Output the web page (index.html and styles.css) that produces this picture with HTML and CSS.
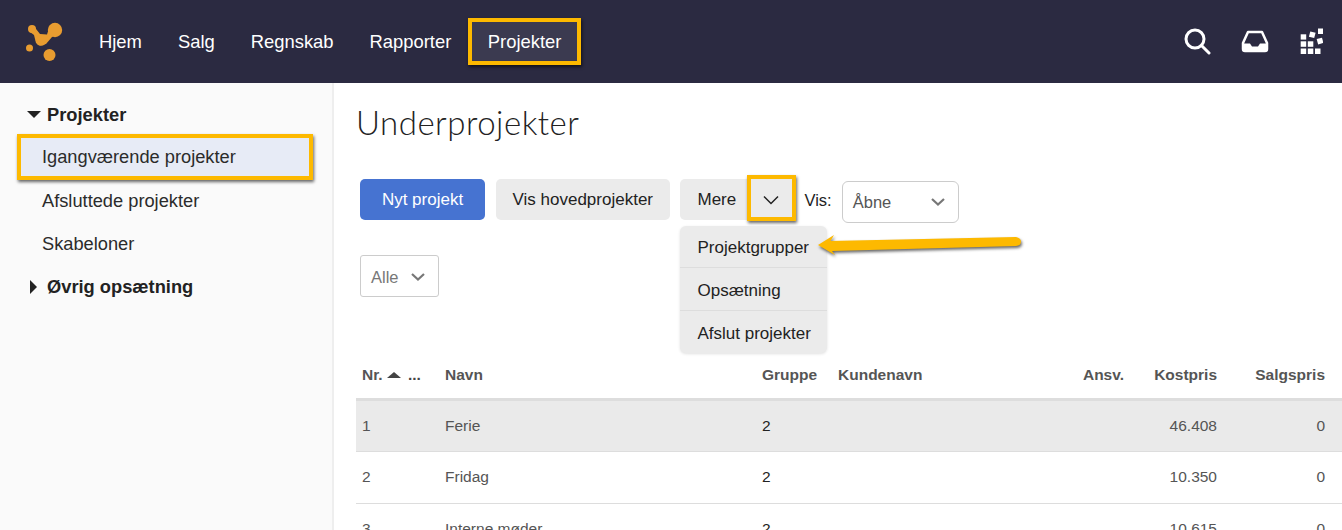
FILE: index.html
```html
<!DOCTYPE html>
<html lang="da">
<head>
<meta charset="utf-8">
<title>Underprojekter</title>
<link rel="stylesheet" href="styles.css">
</head>
<body>
<header class="topbar">
  <svg class="logo" viewBox="25 20 40 42" width="40" height="42" aria-hidden="true">
    <path d="M29.500 25.500 L34.500 26 L40 33 L47 33.500 L50 24 L58 33 L52 36 L46 43 L40 44.500 L36 42 L34 34 L30 31 Z"/>
    <circle cx="32" cy="28" r="4"/><circle cx="55" cy="29" r="7.200"/><circle cx="41" cy="39.500" r="5.200"/>
    <circle cx="29.500" cy="47" r="3.500"/><circle cx="49.500" cy="54" r="6"/>
  </svg>
  <nav class="mainnav">
    <a class="navlink">Hjem</a>
    <a class="navlink">Salg</a>
    <a class="navlink">Regnskab</a>
    <a class="navlink">Rapporter</a>
    <a class="navlink navlink-active">Projekter</a>
  </nav>
  <div class="topicons">
    <svg viewBox="0 0 28 28" width="28" height="28" aria-hidden="true"><circle cx="12" cy="11" r="9" class="ic-stroke"/><path d="M18.500 17.500 L26 25" class="ic-stroke"/></svg>
    <svg viewBox="0 0 28 24" width="28" height="24" aria-hidden="true"><path d="M7 2 H21 L26 13 V19 Q26 21 24 21 H4 Q2 21 2 19 V13 Z" class="ic-inbox"/><path d="M2 13.500 H9 L11 16.500 H17 L19 13.500 H26 V19 Q26 21 24 21 H4 Q2 21 2 19 Z" class="ic-fill"/></svg>
    <svg class="ic-grid" viewBox="1300 28 23 27" width="23" height="27" aria-hidden="true">
      <rect x="1300.700" y="34.300" width="5.500" height="5.300"/>
      <rect x="1300.700" y="41.300" width="5.500" height="5.500"/><rect x="1307.800" y="41.300" width="5.500" height="5.500"/>
      <rect x="1300.700" y="48.500" width="5.500" height="5.500"/><rect x="1307.800" y="48.500" width="5.500" height="5.500"/><rect x="1315" y="48.500" width="5.500" height="5.500"/>
      <rect x="1309.500" y="32" width="5.500" height="5.500" transform="rotate(15 1312.250 34.750)"/>
      <rect x="1318" y="28.500" width="5.500" height="5.500"/>
      <rect x="1317.300" y="38.300" width="5.500" height="5.500" transform="rotate(-15 1320 41)"/>
    </svg>
  </div>
</header>
<div class="layout">
  <aside class="sidebar">
    <div class="sidehead"><span class="tri-down"></span>Projekter</div>
    <a class="sideitem sideitem-active">Igangværende projekter</a>
    <a class="sideitem">Afsluttede projekter</a>
    <a class="sideitem">Skabeloner</a>
    <div class="sidehead"><span class="tri-right"></span>Øvrig opsætning</div>
  </aside>
  <main class="content">
    <h1 class="title">Underprojekter</h1>
    <div class="toolbar">
      <button class="btn btn-primary">Nyt projekt</button>
      <button class="btn">Vis hovedprojekter</button>
      <div class="split">
        <button class="split-main">Mere</button>
        <button class="split-toggle" aria-label="Mere"><svg viewBox="0 0 16 10" width="16" height="10" aria-hidden="true"><path d="M1 1.500 L8 8.500 L15 1.500" class="chev-thin"/></svg></button>
        <ul class="menu">
          <li class="menuitem">Projektgrupper</li>
          <li class="menuitem">Opsætning</li>
          <li class="menuitem">Afslut projekter</li>
        </ul>
        <svg class="arrow" viewBox="815 230 210 28" width="210" height="28" aria-hidden="true"><path d="M818 245 L834 235 L830.500 241 L1016 237 Q1021 238 1021 241.500 Q1021 245.500 1016 246 L832 251 L835 255 Z"/></svg>
      </div>
      <span class="vis-label">Vis:</span>
      <div class="select select-open">Åbne<svg viewBox="0 0 16 10" width="16" height="10" aria-hidden="true"><path d="M2 2 L8 7.500 L14 2" class="chev"/></svg></div>
    </div>
    <div class="select select-all">Alle<svg viewBox="0 0 16 10" width="16" height="10" aria-hidden="true"><path d="M2 2 L8 7.500 L14 2" class="chev"/></svg></div>
    <table class="grid">
      <thead>
        <tr>
          <th class="c-nr">Nr. <span class="tri-up"></span><span class="dots">...</span></th>
          <th class="c-name">Navn</th>
          <th class="c-grp">Gruppe</th>
          <th class="c-cust">Kundenavn</th>
          <th class="c-resp num">Ansv.</th>
          <th class="c-cost num">Kostpris</th>
          <th class="c-sale num">Salgspris</th>
        </tr>
      </thead>
      <tbody>
        <tr class="row-hover"><td>1</td><td>Ferie</td><td class="strong">2</td><td></td><td></td><td class="num">46.408</td><td class="num">0</td></tr>
        <tr><td>2</td><td>Fridag</td><td class="strong">2</td><td></td><td></td><td class="num">10.350</td><td class="num">0</td></tr>
        <tr><td>3</td><td>Interne møder</td><td class="strong">2</td><td></td><td></td><td class="num">10.615</td><td class="num">0</td></tr>
      </tbody>
    </table>
  </main>
</div>
</body>
</html>
```
FILE: styles.css
```css
* { box-sizing: border-box; }
html, body { margin: 0; height: 530px; overflow: hidden; background: #fff; }
body { font-family: "Liberation Sans", Arial, sans-serif; color: #222; font-size: 17px; }

.topbar { height: 83px; background: #2b2a41; display: flex; align-items: center; padding: 0 19px 0 25px; }
.logo { flex: none; fill: #e89c30; }
.mainnav { display: flex; align-items: center; margin-left: 16px; }
.navlink { color: #fff; font-size: 18.400px; padding: 0 18px; white-space: nowrap; }
.navlink-active { margin-left: -1px; padding: 0 16px 0 15.500px; height: 47px; line-height: 39px; background: #3b3a50; border: 4px solid #fdb900; box-shadow: 1px 2px 3px rgba(0,0,0,.6); }
.topicons { margin-left: auto; display: flex; align-items: center; gap: 30px; }
.ic-stroke { fill: none; stroke: #fff; stroke-width: 3; stroke-linecap: round; }
.ic-inbox { fill: none; stroke: #fff; stroke-width: 2.500; stroke-linejoin: round; }
.ic-fill { fill: #fff; }
.ic-grid { fill: #fff; margin-left: 1px; }

.layout { display: flex; height: 447px; }
.sidebar { width: 334px; flex: none; background: #fafafa; border-right: 2px solid #eee; padding-top: 10px; }
.sidehead { height: 43px; display: flex; align-items: center; font-weight: bold; font-size: 18.300px; color: #222; padding-left: 27px; }
.tri-down { width: 0; height: 0; border-left: 7px solid transparent; border-right: 7px solid transparent; border-top: 7px solid #222; margin-right: 6px; }
.tri-right { width: 0; height: 0; border-top: 7px solid transparent; border-bottom: 7px solid transparent; border-left: 7px solid #222; margin: 0 10px 0 3px; }
.sideitem { display: flex; align-items: center; height: 43px; padding-left: 42px; font-size: 18.250px; color: #2b2b2b; }
.sideitem-active { height: 46px; margin: -2px 19px -1px 17px; padding-left: 21px; background: #e7ebf6; border: 4px solid #fdb900; box-shadow: 1px 2px 3px rgba(0,0,0,.6); }

.content { flex: 1; min-width: 0; padding: 0 0 0 22px; }
.title { margin: 0; padding-top: 20px; font-family: Lato, "Liberation Sans", sans-serif; font-weight: 300; font-size: 33px; line-height: 38px; color: #222; letter-spacing: .5px; }
.toolbar { display: flex; align-items: flex-start; margin: 38px 0 0 4px; }
.btn { height: 41px; border: 0; border-radius: 5px; background: #ebebeb; font: 17px "Liberation Sans", Arial, sans-serif; color: #222; padding: 1px 16.500px 0; margin-right: 11px; }
.btn-primary { background: #4673d1; color: #fff; width: 125px; padding: 1px 0 0; }
.split { position: relative; display: flex; height: 41px; width: 116px; background: #ebebeb; border-radius: 5px; margin-left: -1px; }
.split-main { width: 67px; border: 0; background: none; font: 17px "Liberation Sans", Arial, sans-serif; color: #222; text-align: left; padding: 1px 0 0 18px; }
.split-toggle { position: absolute; left: 67px; top: -4px; width: 49px; height: 46px; background: #ebebeb; border: 4px solid #fdb900; box-shadow: 1px 2px 3px rgba(0,0,0,.6); display: flex; align-items: center; justify-content: center; padding: 3px 0 0; }
.chev-thin { fill: none; stroke: #222; stroke-width: 1.500; }
.menu { position: absolute; left: 0; top: 47px; width: 147px; margin: 0; padding: 0; list-style: none; background: #ebebeb; border-radius: 6px; box-shadow: 0 1px 3px rgba(0,0,0,.12); }
.menuitem { height: 43px; display: flex; align-items: center; padding: 3px 0 0 18px; font-size: 17px; color: #222; white-space: nowrap; }
.menuitem:first-child { height: 41px; padding-top: 2px; }
.menuitem + .menuitem { border-top: 1px solid #ddd; }
.arrow { position: absolute; left: 135px; top: 51px; fill: #fdb900; overflow: visible; filter: drop-shadow(1px 2px 1.500px rgba(0,0,0,.6)); }
.vis-label { font-size: 16.500px; margin: 12px 10px 0 9px; color: #222; }
.select { display: flex; align-items: center; justify-content: space-between; height: 42px; background: #fff; border: 1px solid #ccc; font-size: 16.500px; }
.select svg { flex: none; }
.select-open { width: 117px; border-radius: 6px; margin-top: 2px; padding: 0 12px 0 10px; color: #555; }
.select-all { width: 79px; border-radius: 3px; margin: 32px 0 0 4px; padding: 2px 12px 0 10px; color: #777; }
.chev { fill: none; stroke: #777; stroke-width: 2.200; }

.grid { table-layout: fixed; border-collapse: collapse; width: 986px; margin-top: 54px; font-size: 15.500px; color: #555; }
.grid th { height: 48px; text-align: left; font-size: 15.500px; color: #555; padding: 2px 6px 0; border-bottom: 3px solid #ddd; white-space: nowrap; }
.grid td { height: 52px; padding: 0 6px; border-bottom: 1px solid #ddd; }
.grid th.num, .grid td.num { text-align: right; }
.grid th:last-child, .grid td:last-child { padding-right: 17px; }
.c-nr { width: 83px; }
.c-name { width: 317px; }
.c-grp { width: 76px; }
.c-cust { width: 220px; }
.c-resp { width: 78px; }
.c-cost { width: 93px; }
.c-sale { width: 119px; }
.row-hover { background: #eaeaea; }
.grid td.strong { color: #222; }
.tri-up { display: inline-block; width: 0; height: 0; border-left: 7px solid transparent; border-right: 7px solid transparent; border-bottom: 6px solid #444; vertical-align: 2px; }
.dots { color: #444; margin-left: 7px; }
```
